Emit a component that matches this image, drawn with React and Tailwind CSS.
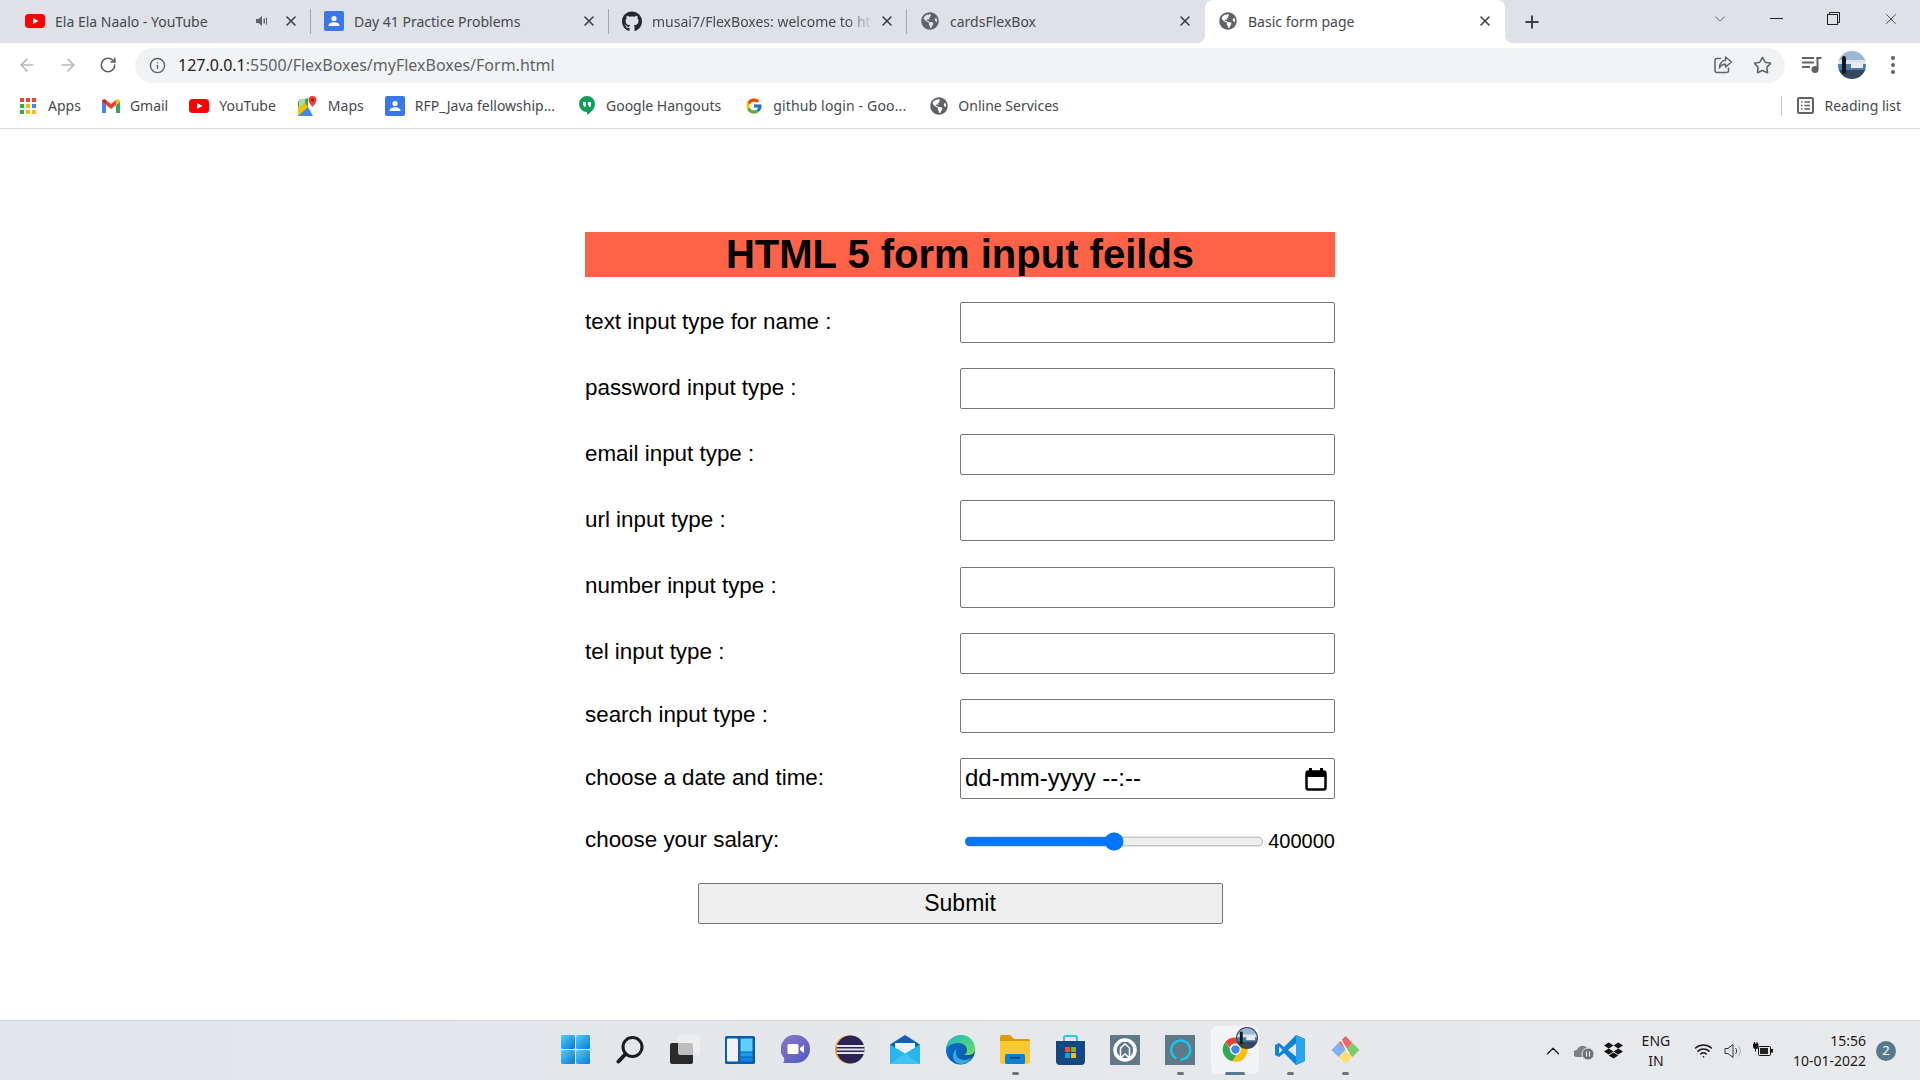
import React from 'react';
import { ArrowLeft, ArrowRight, RotateCw, Info, Star, Plus, X, ChevronDown, ChevronUp, Wifi } from 'lucide-react';
import { FaGithub, FaGlobeAmericas, FaDropbox } from 'react-icons/fa';
import { FcGoogle } from 'react-icons/fc';

const YouTubeIcon = ({ size = 20 }) => (
  <svg width={size} height={size * 0.7} viewBox="0 0 20 14">
    <rect width="20" height="14" rx="3.5" fill="#f00" />
    <path d="M8 4l5.5 3L8 10z" fill="#fff" />
  </svg>
);

const PersonDocIcon = () => (
  <svg width="20" height="20" viewBox="0 0 20 20">
    <rect width="20" height="20" rx="2" fill="#3b78e7" />
    <circle cx="10" cy="7.5" r="2.6" fill="#fff" />
    <path d="M4.5 15c0-2.8 3-3.8 5.500-3.800s5.500 1 5.500 3.800z" fill="#fff" />
  </svg>
);

const AppsIcon = () => (
  <svg width="16" height="16" viewBox="0 0 16 16">
    {[['#ea4335', '#ea4335', '#ea4335'], ['#34a853', '#fbbc04', '#4285f4'], ['#34a853', '#fbbc04', '#fbbc04']].map((row, r) =>
      row.map((c, i) => <rect key={`${r}-${i}`} x={i * 6} y={r * 6} width="4" height="4" fill={c} />)
    )}
  </svg>
);

const GmailIcon = () => (
  <svg width="18" height="14" viewBox="0 0 18 14">
    <path d="M0 2.500V14h4V6z" fill="#4285f4" />
    <path d="M18 2.500V14h-4V6z" fill="#34a853" />
    <path d="M4 6V1L9 5l5-4v5L9 10z" fill="#ea4335" />
    <path d="M0 2.500C0 .5 2.500-.5 4 1v5z" fill="#c5221f" />
    <path d="M18 2.500C18 .5 15.500-.5 14 1v5z" fill="#fbbc04" />
  </svg>
);

const MapsIcon = () => (
  <svg width="20" height="20" viewBox="0 0 20 20">
    <path d="M0 5l10-3v15L0 20z" fill="#34a853" />
    <path d="M0 20l10-9 5 9z" fill="#4285f4" />
    <path d="M0 11l6-5 4 5-10 9z" fill="#fbbc04" />
    <path d="M1 3l6 0 0 4-6 4z" fill="#a8dab5" />
    <path d="M14.500 0a4 4 0 0 1 4 4c0 3-4 7-4 7s-4-4-4-7a4 4 0 0 1 4-4z" fill="#ea4335" />
    <circle cx="14.500" cy="4" r="1.500" fill="#a50e0e" />
  </svg>
);

const HangoutsIcon = () => (
  <svg width="18" height="20" viewBox="0 0 18 20">
    <path d="M9 0a8 8 0 0 1 8 8c0 5-4.500 8.500-8 11v-3a8 8 0 0 1 0-16z" fill="#0f9d58" />
    <path d="M5 6h3v3c0 1.200-.7 2-1.800 2.200V9.500H5zM10 6h3v3c0 1.200-.7 2-1.800 2.200V9.500H10z" fill="#fff" />
  </svg>
);

const ReadingIcon = () => (
  <svg width="17" height="17" viewBox="0 0 17 17" fill="none" stroke="#5f6368" strokeWidth="1.500">
    <rect x="1" y="1" width="15" height="15" rx="1" strokeWidth="2" />
    <path d="M4 5h1.500M7.500 5H13M4 8.500h1.500M7.500 8.500H13M4 12h1.500M7.500 12H13" />
  </svg>
);

const ShareIcon = () => (
  <svg width="20" height="20" viewBox="0 0 20 20" fill="none" stroke="#5f6368" strokeWidth="1.500">
    <path d="M8 3.500H4a2 2 0 0 0-2 2v10a2 2 0 0 0 2 2h9.500a2 2 0 0 0 2-2v-3" />
    <path d="M12.500 2l6 5-6 5V9.200C9.500 9.200 7.500 10.500 6.500 13c0-4.500 2.500-7.500 6-7.800z" strokeLinejoin="round" />
  </svg>
);

const QueueIcon = () => (
  <svg width="20" height="18" viewBox="0 0 20 18" fill="#5f6368">
    <rect y="1" width="12" height="2" />
    <rect y="5.500" width="12" height="2" />
    <rect y="10" width="8" height="2" />
    <rect x="14.500" y="1" width="2" height="12" />
    <rect x="14.500" y="1" width="5" height="2" />
    <circle cx="13" cy="13.500" r="3.500" />
  </svg>
);

const Avatar = ({ size = 28 }) => (
  <svg width={size} height={size} viewBox="0 0 28 28">
    <defs>
      <clipPath id={`avatar-clip-${size}`}><circle cx="14" cy="14" r="14" /></clipPath>
    </defs>
    <g clipPath={`url(#avatar-clip-${size})`}>
      <rect width="28" height="10" fill="#9db7d2" />
      <rect y="9" width="28" height="5" fill="#d9e3ec" />
      <rect y="13" width="28" height="7" fill="#4f7ba8" />
      <rect y="19" width="28" height="9" fill="#36485c" />
      <rect x="13" y="12" width="12" height="5" fill="#e6ecf1" />
      <rect x="4" y="5" width="4" height="18" rx="2" fill="#15181c" />
    </g>
  </svg>
);

const Tab = ({ icon, title, active, fade, audio, last }) => (
  <div
    className={`relative flex h-[43px] w-[298px] shrink-0 items-center pb-[1px] pl-[13px] pr-[12px] first:w-[299px] ${
      active
        ? "ml-0 w-[300px] rounded-t-[8px] bg-white before:absolute before:bottom-0 before:left-[-8px] before:h-2 before:w-2 before:bg-[radial-gradient(circle_at_0_0,transparent_8px,white_8px)] before:content-[''] after:absolute after:bottom-0 after:right-[-8px] after:h-2 after:w-2 after:bg-[radial-gradient(circle_at_100%_0,transparent_8px,white_8px)] after:content-['']"
        : ''
    }`}
  >
    <span className="flex w-[20px] shrink-0 items-center justify-center">{icon}</span>
    <span
      className={`ml-[10px] flex-1 whitespace-nowrap text-[14px] text-[#45494e] ${
        fade ? '[mask-image:linear-gradient(to_right,black_88%,transparent)]' : ''
      }`}
    >
      {title}
    </span>
    {audio && (
      <svg width="14" height="14" viewBox="0 0 14 14" fill="#5f6368" className="mr-[8px] shrink-0">
        <path d="M1 5h2.500L7 2v10L3.500 9H1z" />
        <rect x="8.500" y="4.500" width="1.500" height="5" />
        <rect x="11" y="3.500" width="1" height="7" />
      </svg>
    )}
    <X size={16} strokeWidth={2.4} className="ml-[6px] shrink-0 text-[#3c4043]" />
    {!active && !last && <span className="absolute right-0 top-[9px] h-[25px] w-px bg-[#a4a7ab]" />}
  </div>
);

const Bookmark = ({ icon, label, gap = 'gap-[10px]', className = '' }) => (
  <div className={`flex items-center text-[14px] text-[#45494e] ${gap} ${className}`}>
    {icon}
    <span className="whitespace-nowrap">{label}</span>
  </div>
);

const WindowsIcon = () => (
  <svg width="29" height="29" viewBox="0 0 29 29">
    <defs>
      <linearGradient id="win" x1="0" y1="0" x2="1" y2="1">
        <stop offset="0" stopColor="#4fd0f7" />
        <stop offset="1" stopColor="#0a78d4" />
      </linearGradient>
    </defs>
    <rect width="14" height="14" rx="1.500" fill="url(#win)" />
    <rect x="15" width="14" height="14" rx="1.500" fill="url(#win)" />
    <rect y="15" width="14" height="14" rx="1.500" fill="url(#win)" />
    <rect x="15" y="15" width="14" height="14" rx="1.500" fill="url(#win)" />
  </svg>
);

const SearchIcon = () => (
  <svg width="29" height="29" viewBox="0 0 29 29" fill="none" stroke="#1c1c1c">
    <circle cx="16.500" cy="12" r="9.500" strokeWidth="3" />
    <path d="M9.500 19L2.500 26.500" strokeWidth="4" strokeLinecap="round" />
  </svg>
);

const TaskViewIcon = () => (
  <svg width="30" height="29" viewBox="0 0 30 29">
    <rect y="8" width="23" height="21" rx="2" fill="#2a2a2a" />
    <rect x="8" width="22" height="20" rx="2" fill="#f0f0f0" fillOpacity="0.75" />
  </svg>
);

const WidgetsIcon = () => (
  <svg width="30" height="28" viewBox="0 0 30 28">
    <rect width="30" height="28" rx="1.500" fill="#0a5ea8" />
    <rect x="2" y="2.500" width="11" height="23" rx="1" fill="#f0f2f5" />
    <rect x="15.500" y="2.500" width="12" height="13" fill="#5fd0fb" />
    <rect x="15.500" y="16.500" width="12" height="4" fill="#1e9bf0" />
    <rect x="15.500" y="21.500" width="12" height="4" fill="#0a84e8" />
  </svg>
);

const ChatIcon = () => (
  <svg width="29" height="29" viewBox="0 0 29 29">
    <defs>
      <linearGradient id="chat" x1="0" y1="0" x2="1" y2="1">
        <stop offset="0" stopColor="#8c78c8" />
        <stop offset="1" stopColor="#4f58c8" />
      </linearGradient>
    </defs>
    <path d="M15 0a14 14 0 0 1 0 28H1.500c1.500-1 2-2.500 1.500-5A14 14 0 0 1 15 0z" fill="url(#chat)" />
    <rect x="6.500" y="9" width="11" height="10" rx="1.500" fill="#fff" />
    <path d="M19 13l4-3v8l-4-3z" fill="#fff" />
  </svg>
);

const EclipseIcon = () => (
  <svg width="30" height="29" viewBox="0 0 30 29">
    <circle cx="14" cy="14.500" r="14" fill="#f39c28" />
    <circle cx="15.500" cy="14.500" r="14" fill="#2c2255" />
    <rect x="1.500" y="10" width="28" height="2" fill="#e4e2ee" />
    <rect x="1.500" y="13.500" width="28" height="2" fill="#e4e2ee" />
    <rect x="2" y="17" width="27" height="2" fill="#e4e2ee" />
  </svg>
);

const MailIcon = () => (
  <svg width="30" height="29" viewBox="0 0 30 29">
    <path d="M15 0l15 9.500V29H0V9.500z" fill="#0b63b5" />
    <path d="M5 8h20v6l-10 5-10-5z" fill="#eef3f8" />
    <path d="M0 9.500l15 9 15-9V29H0z" fill="#29b6ef" />
    <path d="M0 29l15-10.500L30 29z" fill="#4cc9f5" fillOpacity="0.7" />
  </svg>
);

const EdgeIcon = () => (
  <svg width="29" height="30" viewBox="0 0 29 30">
    <defs>
      <linearGradient id="edge-a" x1="0" y1="0" x2="1" y2="1">
        <stop offset="0" stopColor="#1fb8c8" />
        <stop offset="1" stopColor="#6ee05c" />
      </linearGradient>
      <linearGradient id="edge-b" x1="0" y1="0" x2="1" y2="1">
        <stop offset="0" stopColor="#0c78d0" />
        <stop offset="1" stopColor="#0a4f9e" />
      </linearGradient>
    </defs>
    <circle cx="14.500" cy="15" r="14.500" fill="url(#edge-b)" />
    <path d="M0 14C1 5 8 0 15 0c8 0 14 6 14 14 0 4-3 6-7 6h-4c2-1 3-2.500 3-5 0-4-4-7-8-7C7 8 2 10 0 14z" fill="url(#edge-a)" />
    <path d="M10 18c0 4 4 7 8 7 3 0 6-1 8-3-3 5-7 7-11 7-5 0-8-4-8-8 0-3 1-5 4-7-.7 1-1 2.500-1 4z" fill="#35a8e8" />
  </svg>
);

const FolderIcon = () => (
  <svg width="30" height="29" viewBox="0 0 30 29">
    <path d="M0 2a2 2 0 0 1 2-2h8l4 4h14a2 2 0 0 1 2 2v4H0z" fill="#d99a0b" />
    <path d="M0 6h30v21a2 2 0 0 1-2 2H2a2 2 0 0 1-2-2z" fill="#fcc933" />
    <rect x="5" y="19" width="20" height="10" rx="1.500" fill="#0f80d0" />
    <rect x="10" y="22" width="10" height="1.500" fill="#083e78" />
  </svg>
);

const StoreIcon = () => (
  <svg width="29" height="30" viewBox="0 0 29 30">
    <path d="M8 7V3a2 2 0 0 1 2-2h9a2 2 0 0 1 2 2v4" fill="none" stroke="#2cc6f2" strokeWidth="2" />
    <path d="M0 6h29v20a4 4 0 0 1-4 4H4a4 4 0 0 1-4-4z" fill="#12477f" />
    <rect x="9" y="12" width="5" height="5" fill="#f25022" />
    <rect x="15" y="12" width="5" height="5" fill="#7fba00" />
    <rect x="9" y="18" width="5" height="5" fill="#00a4ef" />
    <rect x="15" y="18" width="5" height="5" fill="#ffb900" />
  </svg>
);

const HomeAppIcon = () => (
  <svg width="30" height="30" viewBox="0 0 30 30">
    <rect width="30" height="30" fill="#5f7986" />
    <circle cx="15" cy="15" r="10" fill="none" stroke="#fff" strokeWidth="3.500" />
    <path d="M10.500 23V13l4.500-4 4.500 4v10l-4.500-4z" fill="none" stroke="#fff" strokeWidth="1.500" />
  </svg>
);

const AlexaIcon = () => (
  <svg width="30" height="30" viewBox="0 0 30 30">
    <rect width="30" height="30" fill="#5f7986" />
    <path d="M11.500 23.500A9.500 9.500 0 1 1 15.500 24.500" fill="none" stroke="#16c6ee" strokeWidth="2.500" />
  </svg>
);

const ChromeIcon = () => (
  <svg width="29" height="29" viewBox="0 0 48 48">
    <path d="M24 4a20 20 0 0 1 17.300 10H24a10 10 0 0 0-9.500 7L7.500 11A20 20 0 0 1 24 4z" fill="#ea4335" />
    <path d="M7.500 11l9.500 16.500a10 10 0 0 0 8.500 6.500L19 43.500A20 20 0 0 1 7.500 11z" fill="#34a853" />
    <path d="M41.300 14A20 20 0 0 1 19 43.500L28.500 28a10 10 0 0 0-4.500-14z" fill="#fbbc04" />
    <circle cx="24" cy="24" r="8" fill="#4285f4" stroke="#fff" strokeWidth="2" />
  </svg>
);

const VsCodeIcon = () => (
  <svg width="30" height="30" viewBox="0 0 30 30">
    <path d="M21 0l9 4v22l-9 4-12-12-5 4-4-2v-10l4-2 5 4z" fill="#0f84d6" />
    <path d="M21 0l9 4v22l-9 4z" fill="#28a5ee" />
    <path d="M21 8.500L13 15l8 6.500z" fill="#e4e7ea" />
    <path d="M4 11.500V18.500L7.500 15z" fill="#e4e7ea" />
  </svg>
);

const GemIcon = () => (
  <svg width="29" height="29" viewBox="0 0 29 29">
    <path d="M14.500 1l7 7-7 7-7-7z" fill="#ee6a6a" />
    <path d="M7.500 8l7 7-7 7-7-7z" fill="#7fb0f5" />
    <path d="M21.500 8l7 7-7 7-7-7z" fill="#7ccc6a" />
    <path d="M14.500 15l7 7-7 7-7-7z" fill="#fbe07a" />
    <path d="M10 5l8 14" stroke="#fff" strokeWidth="1.500" />
  </svg>
);

const taskbarApps = [
  { icon: <WindowsIcon /> },
  { icon: <SearchIcon /> },
  { icon: <TaskViewIcon /> },
  { icon: <WidgetsIcon /> },
  { icon: <ChatIcon /> },
  { icon: <EclipseIcon /> },
  { icon: <MailIcon /> },
  { icon: <EdgeIcon /> },
  { icon: <FolderIcon />, running: true },
  { icon: <StoreIcon /> },
  { icon: <HomeAppIcon /> },
  { icon: <AlexaIcon />, running: true },
  {
    icon: (
      <span className="relative block h-[29px] w-[29px]">
        <ChromeIcon />
        <span className="absolute left-[15px] top-[-8px] rounded-full bg-[#3a4450] p-[1px]"><Avatar size={20} /></span>
      </span>
    ),
    active: true,
  },
  { icon: <VsCodeIcon />, running: true },
  { icon: <GemIcon />, running: true },
];

const TextRow = ({ label, small }) => (
  <div className="flex items-center">
    <label className="w-1/2 pb-[2px] leading-[30px]">{label}</label>
    <input
      type="text"
      className={`w-1/2 rounded-[2px] border border-[#767676] bg-white ${small ? 'h-[34px]' : 'h-[41px]'}`}
    />
  </div>
);

export default function App() {
  return (
    <div className="flex h-[1080px] w-[1920px] flex-col overflow-hidden bg-white font-['Noto_Sans',sans-serif]">
      {/* Tab strip */}
      <div className="flex h-[43px] shrink-0 items-center bg-[#dee1e6] pl-[12px]">
        <Tab icon={<YouTubeIcon />} title="Ela Ela Naalo - YouTube" audio />
        <Tab icon={<PersonDocIcon />} title="Day 41 Practice Problems" />
        <Tab icon={<FaGithub size={21} color="#24292f" />} title="musai7/FlexBoxes: welcome to ht" fade />
        <Tab icon={<FaGlobeAmericas size={18} color="#5f6368" />} title="cardsFlexBox" last />
        <Tab icon={<FaGlobeAmericas size={18} color="#5f6368" />} title="Basic form page" active />
        <Plus size={20} strokeWidth={2.4} className="ml-[17px] text-[#3c4043]" />
        <div className="ml-auto flex items-center pb-[6px] text-[#3c4043]">
          <ChevronDown size={18} strokeWidth={1} className="mr-[41px]" />
          <span className="mr-[44px] h-px w-[13px] bg-[#222]" />
          <svg width="13" height="13" viewBox="0 0 13 13" fill="none" stroke="#222" className="mr-[42px]">
            <rect x="0.500" y="2.500" width="10" height="10" />
            <path d="M2.500 2.500V.5h10v10h-2" />
          </svg>
          <X size={18} strokeWidth={1} className="mr-[20px] text-[#222]" />
        </div>
      </div>

      {/* Toolbar */}
      <div className="flex h-[43px] shrink-0 items-center bg-white pl-[7px] pt-[1px]">
        <span className="flex w-[40px] justify-center"><ArrowLeft size={20} className="text-[#b6b8bb]" /></span>
        <span className="flex w-[41px] justify-center"><ArrowRight size={20} className="text-[#b6b8bb]" /></span>
        <span className="flex w-[39px] justify-center"><RotateCw size={18} strokeWidth={2.2} className="text-[#5f6368]" /></span>
        <div className="ml-[8px] flex h-[35px] w-[1650px] items-center rounded-full bg-[#f1f3f4] pl-[14px] pr-[13px]">
          <Info size={17} strokeWidth={2} className="text-[#5f6368]" />
          <span className="ml-[12px] text-[16px] text-[#5f6368]">
            <span className="text-[#202124]">127.0.0.1</span>:5500/FlexBoxes/myFlexBoxes/Form.html
          </span>
          <span className="ml-auto mr-[20px]"><ShareIcon /></span>
          <Star size={19} strokeWidth={2} className="text-[#5f6368]" />
        </div>
        <span className="ml-[17px]"><QueueIcon /></span>
        <span className="ml-[16px]"><Avatar /></span>
        <span className="ml-[25px] flex flex-col gap-[3px]">
          <i className="h-[4px] w-[4px] rounded-full bg-[#5f6368]" />
          <i className="h-[4px] w-[4px] rounded-full bg-[#5f6368]" />
          <i className="h-[4px] w-[4px] rounded-full bg-[#5f6368]" />
        </span>
      </div>

      {/* Bookmarks */}
      <div className="flex h-[43px] shrink-0 items-center gap-[21px] border-b border-[#dadce0] bg-white pb-[3px] pl-[20px] pr-[19px]">
        <Bookmark icon={<AppsIcon />} label="Apps" gap="gap-[12px]" />
        <Bookmark icon={<GmailIcon />} label="Gmail" />
        <Bookmark icon={<YouTubeIcon />} label="YouTube" />
        <Bookmark icon={<MapsIcon />} label="Maps" className="ml-[1px]" />
        <Bookmark icon={<PersonDocIcon />} label="RFP_Java fellowship..." />
        <Bookmark icon={<HangoutsIcon />} label="Google Hangouts" className="ml-[2px]" />
        <Bookmark icon={<FcGoogle size={18} />} label="github login - Goo..." className="ml-[3px] tracking-[0.15px]" />
        <Bookmark icon={<FaGlobeAmericas size={18} color="#5f6368" />} label="Online Services" className="ml-[3px]" />
        <div className="ml-auto flex h-[20px] items-center border-l border-[#c8cacd] pl-[15px]">
          <Bookmark icon={<ReadingIcon />} label="Reading list" />
        </div>
      </div>

      {/* Page */}
      <main className="flex-1 pt-[102.9px] font-['Liberation_Sans',sans-serif] text-[22.4px] text-black">
        <form className="mx-auto flex w-[750px] flex-col gap-[25.15px]">
          <h1 className="flex h-[45px] items-center justify-center bg-[#ff6347] pb-[1px] text-[40px] font-bold">
            HTML 5 form input feilds
          </h1>
          <TextRow label="text input type for name :" />
          <TextRow label="password input type :" />
          <TextRow label="email input type :" />
          <TextRow label="url input type :" />
          <TextRow label="number input type :" />
          <TextRow label="tel input type :" />
          <TextRow label="search input type :" small />
          <div className="flex items-center">
            <label className="w-1/2 pb-[2px] leading-[30px]">choose a date and time:</label>
            <div className="flex h-[41px] w-1/2 items-center justify-between rounded-[2px] border border-[#767676] pl-[4px] pr-[7px] text-[24px]">
              <span className="pb-[2px]">dd-mm-yyyy --:--</span>
              <svg width="22" height="24" viewBox="0 0 22 24" fill="none">
                <rect x="1.500" y="4.500" width="19" height="18" rx="2" stroke="#000" strokeWidth="2.500" />
                <rect x="1" y="4" width="20" height="6" fill="#000" />
                <rect x="4" y="1" width="3" height="4" fill="#000" />
                <rect x="15" y="1" width="3" height="4" fill="#000" />
              </svg>
            </div>
          </div>
          <div className="flex h-[34px] items-center">
            <label className="w-1/2 pb-[2px] leading-[30px]">choose your salary:</label>
            <div className="flex w-1/2 items-center justify-between">
              <input
                type="range"
                min="0"
                max="800000"
                defaultValue="400000"
                className="ml-[3.33px] w-[250px] accent-[#0075ff] [zoom:1.2]"
              />
              <span className="pb-[1px] text-[20px]">400000</span>
            </div>
          </div>
          <button
            type="button"
            className="mx-auto h-[41px] w-[525px] rounded-[2px] border border-[#767676] bg-[#efefef] pb-[2px] text-[23px]"
          >
            Submit
          </button>
        </form>
      </main>

      {/* Taskbar */}
      <footer className="grid h-[60px] shrink-0 grid-cols-[1fr_auto_1fr] border-t border-[#d3d6d9] bg-gradient-to-r from-[#e2e5ea] to-[#e9eaec]">
        <div />
        <div className="flex">
          {taskbarApps.map((app, i) => (
            <div key={i} className="relative flex h-[59px] w-[55px] items-center justify-center pb-[2px]">
              {app.active && <span className="absolute left-[3px] top-[5px] h-[48px] w-[48px] rounded-md bg-[#f3f4f5]" />}
              <span className="relative">{app.icon}</span>
              {app.running && <span className="absolute bottom-[5px] left-[24px] h-[3px] w-[7px] rounded-full bg-[#6e7478]" />}
              {app.active && <span className="absolute bottom-[5px] left-[17px] h-[3px] w-[20px] rounded-full bg-[#5b7a8c]" />}
            </div>
          ))}
        </div>
        <div className="flex items-center justify-end pr-[24px] text-[14px] text-[#1a1a1a]">
          <ChevronUp size={22} strokeWidth={1.400} className="mr-[10px]" />
          <svg width="21" height="18" viewBox="0 0 21 18" className="mr-[9px]">
            <path d="M3 15a3 3 0 0 1 0-7c1-4 7-6 10-2 3-1 6 1 6 4v2H9v3z" fill="#7b8084" />
            <circle cx="14" cy="12" r="6" fill="#6f7377" stroke="#e4e7ea" />
            <path d="M12.500 9.500v5M15.500 9.500v5" stroke="#fff" />
          </svg>
          <FaDropbox size={19} className="mr-[16px] text-[#111]" />
          <div className="mr-[21px] flex w-[34px] flex-col items-center leading-[20px]">
            <span>ENG</span>
            <span>IN</span>
          </div>
          <Wifi size={19} strokeWidth={2} className="mr-[11px]" />
          <svg width="20" height="18" viewBox="0 0 20 18" fill="none" className="mr-[8px]">
            <path d="M1 6.500h3L9 2.500v13l-5-4H1z" stroke="#333" />
            <path d="M11.500 6c1.500 1.500 1.500 4.500 0 6" stroke="#333" />
            <path d="M14 3.500c3 3 3 8 0 11" stroke="#aaa" />
          </svg>
          <svg width="21" height="18" viewBox="0 0 21 18" className="mr-[20px]">
            <path d="M1 1.500h1V0h1v1.500h1.500V0h1v1.500h1v3a2.500 2.500 0 0 1-2.500 2.500v2.500H3V7a2.500 2.500 0 0 1-2-2.500z" fill="#111" />
            <rect x="6.500" y="4.500" width="12" height="9" rx="1" fill="#e4e7ea" stroke="#111" />
            <rect x="8" y="6" width="8" height="6" fill="#222" />
            <rect x="19" y="7" width="2" height="3.500" fill="#111" />
          </svg>
          <div className="flex flex-col items-end leading-[20px]">
            <span>15:56</span>
            <span>10-01-2022</span>
          </div>
          <span className="ml-[10px] flex h-[20px] w-[20px] items-center justify-center rounded-full bg-[#567a8c] text-[13px] text-white">2</span>
        </div>
      </footer>
    </div>
  );
}
